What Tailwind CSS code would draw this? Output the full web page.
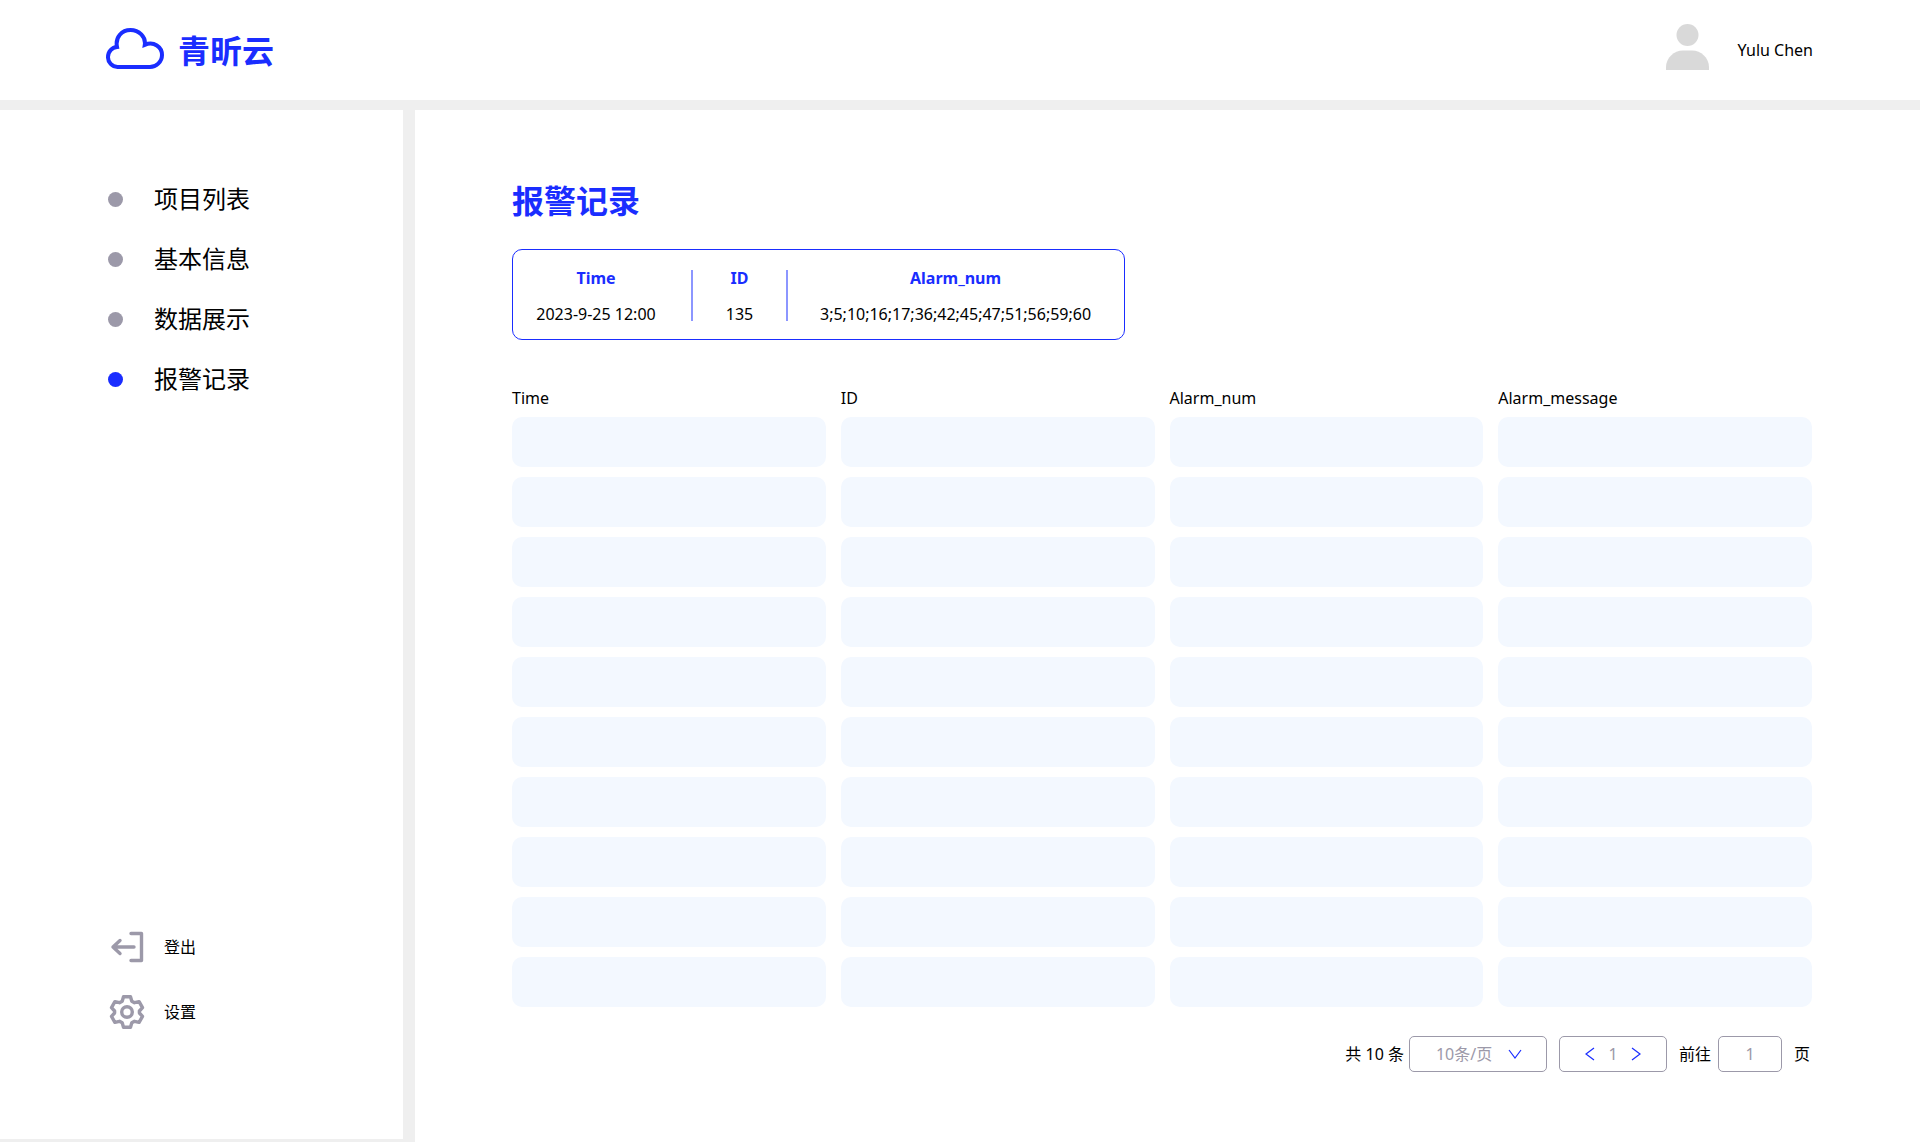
<!DOCTYPE html>
<html lang="zh-CN">
<head>
    <meta charset="UTF-8">
    <meta name="viewport" content="width=device-width, initial-scale=1.0">
    <title>报警记录 | 青昕云</title>
    <script src="https://cdn.jsdelivr.net/npm/@tailwindcss/browser@4"></script>
</head>
<body class="bg-[#efefef] min-h-screen flex flex-col gap-[10px] font-['Noto_Sans','Noto_Sans_CJK_SC',sans-serif] text-base text-black">
    <!-- Header -->
    <header class="bg-white h-[100px] pl-[106px] pr-[107px] flex items-center justify-between">
        <a href="#" class="flex items-center gap-[14px] text-[#1a2dff]">
            <svg class="w-[58px] h-[44px]" viewBox="0 0 58 44" fill="none" stroke="currentColor" stroke-width="4">
                <path d="M11.500 39A9.700 9.700 0 0 1 2 29C2 23.500 6 19.300 11 19C9 9 16 2 24.500 2C33 2 40 9 38.800 16.800C48 13 56 19 56 27C56 34 50 39 44 39Z"/>
            </svg>
            <span class="text-[32px] leading-10 font-bold pt-[2px]">青昕云</span>
        </a>
        <div class="flex items-center gap-7">
            <svg class="w-[43px] h-[52px]" viewBox="0 0 43 52" fill="#d9d9d9">
                <circle cx="21.500" cy="11" r="11"/>
                <path d="M0 46V43C0 34 8 26.500 17 26.500H26C35 26.500 43 34 43 43V46Z"/>
            </svg>
            <span>Yulu Chen</span>
        </div>
    </header>

    <div class="grow flex gap-3">
        <!-- Sidebar -->
        <aside class="bg-white w-[403px] shrink-0 mb-[3px] pl-[108px] pt-[71px] pb-[109px] flex flex-col justify-between">
            <nav class="flex flex-col gap-6 text-2xl leading-9">
                <a href="#" class="flex items-center gap-[31px]"><span class="w-[15px] h-[15px] rounded-full bg-[#9c99a9]"></span>项目列表</a>
                <a href="#" class="flex items-center gap-[31px]"><span class="w-[15px] h-[15px] rounded-full bg-[#9c99a9]"></span>基本信息</a>
                <a href="#" class="flex items-center gap-[31px]"><span class="w-[15px] h-[15px] rounded-full bg-[#9c99a9]"></span>数据展示</a>
                <a href="#" class="flex items-center gap-[31px]"><span class="w-[15px] h-[15px] rounded-full bg-[#1a2dff]"></span>报警记录</a>
            </nav>
            <div class="flex flex-col gap-[29px] pl-px">
                <button type="button" class="flex items-center gap-[19px]">
                    <svg class="w-9 h-9" viewBox="0 0 36 36" fill="none" stroke="#9c99a9" stroke-width="3.400" stroke-linecap="round" stroke-linejoin="round">
                        <path d="M22 4.500H32.500V31.500H22M25 18H4M11 11.500L4 18L11 24.500"/>
                    </svg>
                    登出
                </button>
                <button type="button" class="flex items-center gap-[19px]">
                    <svg class="w-9 h-9" viewBox="0 0 36 36" fill="none" stroke="#9c99a9" stroke-width="3.400" stroke-linejoin="round">
                        <path d="M14.500 2.700H21.500L22.800 7.200L25.500 8.700L30.100 7.600L33.500 13.600L30.400 17V19L33.500 22.400L30.100 28.400L25.500 27.300L22.800 28.800L21.500 33.300H14.500L13.200 28.800L10.500 27.300L5.900 28.400L2.500 22.400L5.600 19V17L2.500 13.600L5.900 7.600L10.500 8.700L13.200 7.200Z"/>
                        <circle cx="18" cy="18" r="5.300"/>
                    </svg>
                    设置
                </button>
            </div>
        </aside>

        <!-- Content -->
        <main class="bg-white grow pl-[97px] pr-[108px] pt-[71px] pb-[70px]">
            <h1 class="text-[32px] leading-10 font-bold text-[#1a2dff]">报警记录</h1>

            <!-- Latest alarm -->
            <dl class="mt-7 w-fit h-[91px] border border-[#1a2dff] rounded-[10px] px-5 pt-[2px] flex items-center text-center leading-5">
                <div class="w-[158px] pr-8">
                    <dt class="font-bold text-[#1a2dff]">Time</dt>
                    <dd class="mt-4 whitespace-nowrap">2023-9-25 12:00</dd>
                </div>
                <div class="w-[2px] h-[51px] bg-[#8c96ff]"></div>
                <div class="w-[93px]">
                    <dt class="font-bold text-[#1a2dff]">ID</dt>
                    <dd class="mt-4">135</dd>
                </div>
                <div class="w-[2px] h-[51px] bg-[#8c96ff]"></div>
                <div class="pl-8 pr-[13px]">
                    <dt class="font-bold text-[#1a2dff]">Alarm_num</dt>
                    <dd class="mt-4">3;5;10;16;17;36;42;45;47;51;56;59;60</dd>
                </div>
            </dl>

            <!-- Records -->
            <div class="mt-[39px] -mx-[15px]">
                <table class="w-full table-fixed border-separate border-spacing-x-[15px] border-spacing-y-[10px]">
                    <thead>
                        <tr class="text-left leading-[18px]">
                            <th class="p-0 font-normal">Time</th>
                            <th class="p-0 font-normal">ID</th>
                            <th class="p-0 font-normal">Alarm_num</th>
                            <th class="p-0 font-normal">Alarm_message</th>
                        </tr>
                    </thead>
                    <tbody id="records"></tbody>
                </table>
            </div>

            <!-- Pagination -->
            <div class="mt-[19px] pr-[2px] flex items-center justify-end">
                <span>共 10 条</span>
                <div class="relative ml-[5px]">
                    <select aria-label="每页条数" class="appearance-none w-[138px] h-9 pl-[26px] border border-[#9c99a9] rounded-[5px] text-[#9c99a9]">
                        <option>10条/页</option>
                    </select>
                    <svg class="absolute right-[25px] top-[13px] w-[14px] h-[10px] pointer-events-none" viewBox="0 0 14 10" fill="none" stroke="#1a2dff" stroke-width="1.200">
                        <path d="M1 1L7 9L13 1"/>
                    </svg>
                </div>
                <div class="ml-3 w-[108px] h-9 px-[25px] border border-[#9c99a9] rounded-[5px] flex items-center justify-between">
                    <button type="button" aria-label="上一页">
                        <svg class="w-[10px] h-[14px]" viewBox="0 0 10 14" fill="none" stroke="#1a2dff" stroke-width="1.200"><path d="M9 1L1 7L9 13"/></svg>
                    </button>
                    <span class="text-[#9c99a9]">1</span>
                    <button type="button" aria-label="下一页">
                        <svg class="w-[10px] h-[14px]" viewBox="0 0 10 14" fill="none" stroke="#1a2dff" stroke-width="1.200"><path d="M1 1L9 7L1 13"/></svg>
                    </button>
                </div>
                <label for="page" class="ml-3">前往</label>
                <input id="page" type="text" value="1" class="ml-[7px] w-16 h-9 border border-[#9c99a9] rounded-[5px] text-center text-[#9c99a9]">
                <span class="ml-3">页</span>
            </div>
        </main>
    </div>

    <script>
        const records = document.getElementById("records");

        // 10 empty rows per page
        for (let i = 0; i < 10; i++) {
            const row = records.insertRow();
            for (let j = 0; j < 4; j++) {
                row.insertCell().className = "h-[50px] p-0 bg-[#f3f8ff] rounded-[10px]";
            }
        }
    </script>
</body>
</html>
